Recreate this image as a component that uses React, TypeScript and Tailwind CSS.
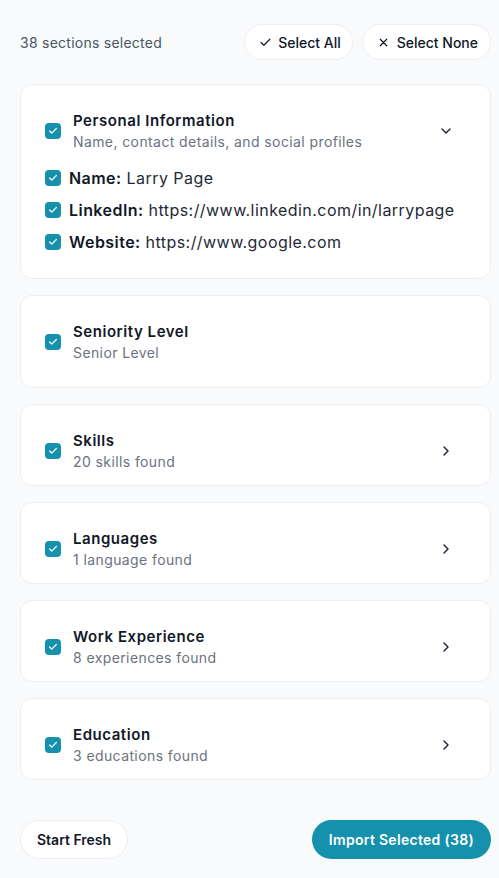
import React from "react";

const TEAL = "bg-[#1591ad]";

function Check({ size = 10 }: { size?: number }) {
  return (
    <svg width={size} height={size} viewBox="0 0 24 24" fill="none" stroke="white" strokeWidth={3} strokeLinecap="round" strokeLinejoin="round">
      <path d="M20 6 9 17l-5-5" />
    </svg>
  );
}

function Box() {
  return (
    <span className={`flex h-4 w-4 shrink-0 items-center justify-center rounded-[4px] ${TEAL}`}>
      <Check />
    </span>
  );
}

function ChevronRight() {
  return (
    <svg width={16} height={16} viewBox="0 0 24 24" fill="none" stroke="#1f2937" strokeWidth={2.2} strokeLinecap="round" strokeLinejoin="round">
      <path d="m9 18 6-6-6-6" />
    </svg>
  );
}

function ChevronDown() {
  return (
    <svg width={16} height={16} viewBox="0 0 24 24" fill="none" stroke="#1f2937" strokeWidth={2.2} strokeLinecap="round" strokeLinejoin="round">
      <path d="m6 9 6 6 6-6" />
    </svg>
  );
}

function Header({ title, sub }: { title: string; sub: string }) {
  return (
    <div className="flex items-center gap-3">
      <Box />
      <div className="flex min-w-0 flex-col">
        <span className="text-[15px] leading-[23px] font-semibold tracking-[0.55px] text-[#111827]">{title}</span>
        <span className="text-[14px] leading-[20px] tracking-[0.4px] text-[#6b7280]">{sub}</span>
      </div>
    </div>
  );
}

function Item({ label, value }: { label: string; value: string }) {
  return (
    <div className="flex h-6 items-center gap-2">
      <Box />
      <span className="text-[16px] leading-6 tracking-[0.45px] text-[#1f2937] whitespace-nowrap">
        <span className="font-semibold text-[#111827]">{label}</span> {value}
      </span>
    </div>
  );
}

function CollapsedCard({ title, sub }: { title: string; sub: string }) {
  return (
    <div className="flex items-center justify-between rounded-xl border border-[#eceef2] bg-white px-6 pt-6 pb-[13px]">
      <Header title={title} sub={sub} />
      <span className="flex h-10 w-10 items-center justify-center">
        <ChevronRight />
      </span>
    </div>
  );
}

export default function App() {
  return (
    <div className="min-h-screen bg-[#f8fafc] pl-5 pr-2 pt-6 pb-4" style={{ fontFamily: "Inter, 'Noto Sans', sans-serif" }}>
      <div className="flex h-9 items-center justify-between">
        <span className="text-[14px] tracking-[0.25px] text-[#4b5563]">38 sections selected</span>
        <div className="flex items-center gap-[9px]">
          <button className="flex h-9 items-center gap-[6px] rounded-full border border-[#eceef2] bg-white pl-[14px] pr-[11px] text-[14px] font-medium text-[#111827]">
            <svg width={13} height={13} viewBox="0 0 24 24" fill="none" stroke="#111827" strokeWidth={2.2} strokeLinecap="round" strokeLinejoin="round">
              <path d="M20 6 9 17l-5-5" />
            </svg>
            Select All
          </button>
          <button className="flex h-9 items-center gap-[7px] rounded-full border border-[#eceef2] bg-white pl-[14px] pr-[12px] text-[14px] font-medium text-[#111827]">
            <svg width={13} height={13} viewBox="0 0 24 24" fill="none" stroke="#111827" strokeWidth={2.2} strokeLinecap="round" strokeLinejoin="round">
              <path d="M18 6 6 18M6 6l12 12" />
            </svg>
            Select None
          </button>
        </div>
      </div>

      <div className="mt-6 flex flex-col gap-4">
        <div className="rounded-xl border border-[#eceef2] bg-white px-6 pt-6 pb-6">
          <div className="flex items-center justify-between">
            <Header title="Personal Information" sub="Name, contact details, and social profiles" />
            <span className="flex h-10 w-10 items-center justify-center">
              <ChevronDown />
            </span>
          </div>
          <div className="mt-[14px] flex flex-col gap-2">
            <Item label="Name:" value="Larry Page" />
            <Item label="LinkedIn:" value="https://www.linkedin.com/in/larrypage" />
            <Item label="Website:" value="https://www.google.com" />
          </div>
        </div>

        <div className="flex items-center rounded-xl border border-[#eceef2] bg-white p-6">
          <Header title="Seniority Level" sub="Senior Level" />
        </div>

        <CollapsedCard title="Skills" sub="20 skills found" />
        <CollapsedCard title="Languages" sub="1 language found" />
        <CollapsedCard title="Work Experience" sub="8 experiences found" />
        <CollapsedCard title="Education" sub="3 educations found" />
      </div>

      <div className="mt-10 flex items-center justify-between">
        <button className="flex h-[39px] items-center rounded-full border border-[#eceef2] bg-white px-4 text-[14px] font-semibold text-[#111827]">
          Start Fresh
        </button>
        <button className={`flex h-[39px] items-center rounded-full ${TEAL} px-[17px] text-[14px] font-semibold tracking-[0.3px] text-white`}>
          Import Selected (38)
        </button>
      </div>
    </div>
  );
}
